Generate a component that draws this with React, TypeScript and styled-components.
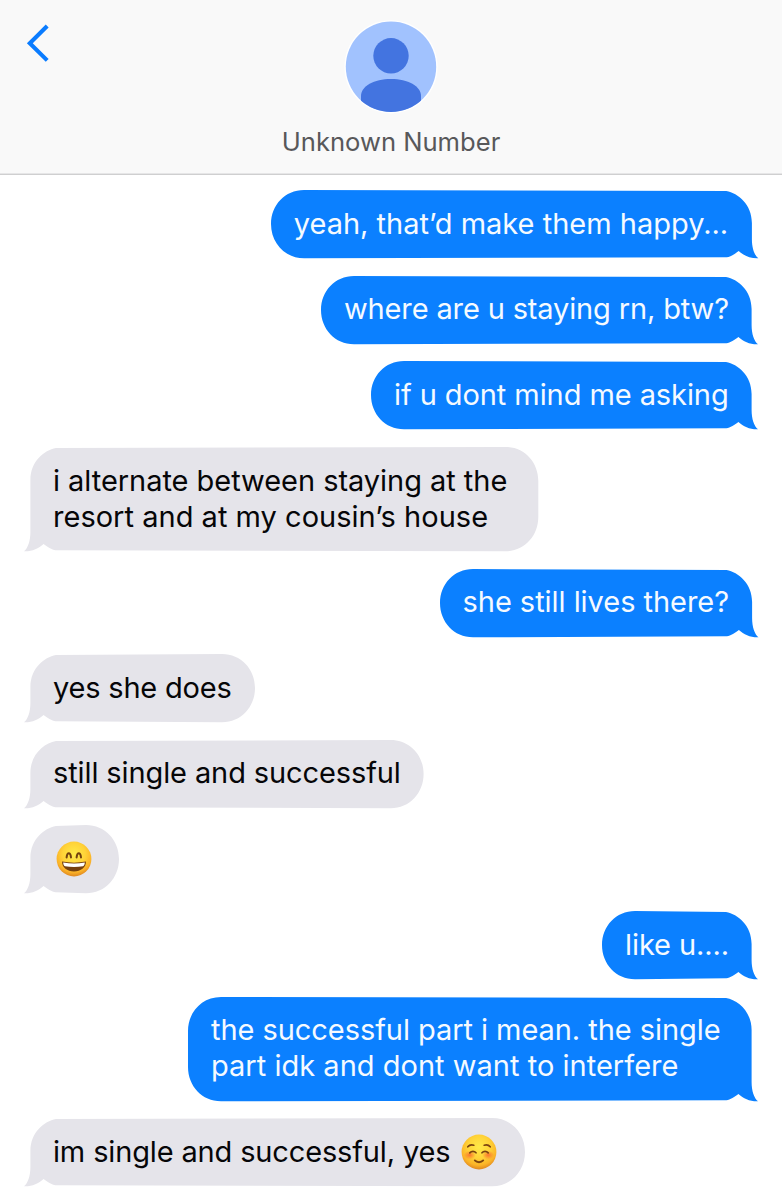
import React from 'react';
import styled, { createGlobalStyle } from 'styled-components';

const SENT = '#0b80ff';
const RECEIVED = '#e5e4ea';

const GlobalStyle = createGlobalStyle`
  * { box-sizing: border-box; }
  body { margin: 0; background: #fff; }
`;

const Screen = styled.div`
  width: 100%;
  height: 1200px;
  overflow: hidden;
  background: #fff;
  font-family: Inter, 'Liberation Sans', sans-serif;
`;

const Header = styled.header`
  display: grid;
  grid-template-columns: 60px 1fr 60px;
  height: 175px;
  background: #f9f9f9;
  border-bottom: 1px solid #cfcfd0;
  box-shadow: inset 0 -1px 0 #e6e6e7;
`;

const BackButton = styled.button`
  align-self: start;
  justify-self: end;
  width: 36px;
  height: 44px;
  margin-top: 21px;
  padding: 0;
  border: 0;
  background: none;
  cursor: pointer;
`;

const Contact = styled.div`
  display: flex;
  flex-direction: column;
  align-items: center;
  padding-top: 20px;
`;

const ContactName = styled.h1`
  margin: 12px 0 0;
  font-size: 25.6px;
  font-weight: 400;
  line-height: 32px;
  color: #58585a;
  white-space: nowrap;
`;

const Thread = styled.main`
  display: flex;
  flex-direction: column;
  gap: 17.62px;
  padding: 15.1px 24px 0;
`;

const Bubble = styled.div<{ $sent: boolean; $width: number; $lines: number }>`
  position: relative;
  flex: none;
  align-self: ${(p) => (p.$sent ? 'flex-end' : 'flex-start')};
  width: ${(p) => p.$width}px;
  height: ${(p) => 32 + p.$lines * 36}px;
  padding: 15.7px 0 0 ${(p) => (p.$sent ? 23 : 29)}px;
  color: ${(p) => (p.$sent ? '#f5faff' : '#060608')};
`;

const Outline = styled.svg<{ $sent: boolean }>`
  position: absolute;
  inset: 0;
  overflow: visible;
  fill: ${(p) => (p.$sent ? SENT : RECEIVED)};
  transform: ${(p) => (p.$sent ? 'none' : 'scaleX(-1)')};
`;

const Line = styled.div<{ $tracking: number }>`
  position: relative;
  display: flex;
  align-items: center;
  height: 36px;
  font-size: 29px;
  line-height: 36px;
  letter-spacing: ${(p) => p.$tracking}px;
  white-space: pre;
`;

const EmojiIcon = styled.svg<{ $gap: number }>`
  flex: none;
  width: 36px;
  height: 36px;
  margin-left: ${(p) => p.$gap}px;
`;

type EmojiKind = 'grin' | 'relaxed';

function Emoji({ kind, gap }: { kind: EmojiKind; gap: number }) {
  const face = `${kind}-face`;
  const blush = `${kind}-blush`;
  return (
    <EmojiIcon viewBox="0 0 36 36" $gap={gap} role="img" aria-label={kind}>
      <defs>
        <radialGradient id={face} cx="50%" cy="36%" r="65%">
          <stop offset="0" stopColor="#ffea48" />
          <stop offset="0.5" stopColor="#ffd338" />
          <stop offset="0.8" stopColor="#fbb328" />
          <stop offset="1" stopColor="#dd8420" />
        </radialGradient>
        <radialGradient id={blush}>
          <stop offset="0" stopColor="#f9642e" stopOpacity="0.85" />
          <stop offset="1" stopColor="#f9642e" stopOpacity="0" />
        </radialGradient>
      </defs>
      <circle cx="18" cy="18" r="17.4" fill={`url(#${face})`} />
      {kind === 'grin' ? (
        <>
          <g fill="none" stroke="#74420f" strokeWidth="2" strokeLinecap="round">
            <path d="M10.6 16.4C11.2 11 14.4 11 15 16.4" />
            <path d="M20.6 16.4C21.2 11 24.4 11 25 16.4" />
          </g>
          <path d="M6 20.6C14 22 22 22 30 20.6C30 26.8 24.8 30.4 18 30.4S6 26.8 6 20.6Z" fill="#75400f" />
          <path d="M7.2 21.4C14.5 22.8 21.5 22.8 28.8 21.4C28.7 23.4 28 24.8 27 25.2C21 26.2 15 26.2 9 25.2C7.8 24.6 7.3 23.4 7.2 21.4Z" fill="#fff" />
        </>
      ) : (
        <>
          <ellipse cx="8.8" cy="21" rx="6" ry="4.4" fill={`url(#${blush})`} />
          <ellipse cx="27.2" cy="21" rx="6" ry="4.4" fill={`url(#${blush})`} />
          <g fill="none" stroke="#7b4310" strokeWidth="1.7" strokeLinecap="round">
            <path d="M6.8 12.8C8.2 11 10.4 10.4 12.8 11.2" />
            <path d="M23.2 11.2C25.6 10.4 27.8 11 29.2 12.8" />
            <path d="M8.8 18.8C10.6 17 13.4 17 15 18.8" />
            <path d="M21 18.8C22.6 17 25.4 17 27.2 18.8" />
            <path d="M13.8 26.4C16 28.8 20 28.8 22.2 26.4" strokeWidth="1.9" />
          </g>
        </>
      )}
    </EmojiIcon>
  );
}

/* Rounded body with a slight taper toward the tail, which hangs from the lower right corner. */
function bubblePath(w: number, h: number) {
  const edge = w - 6.4;
  return [
    `M33 0L${w - 32} 1`,
    `C${w - 20} 3.2 ${edge} 14.5 ${edge} 33`,
    `V${h - 19}`,
    `C${edge} ${h - 10} ${w - 4} ${h - 3} ${w} ${h + 0.3}`,
    `C${w - 8} ${h + 0.6} ${w - 14.5} ${h - 2.4} ${w - 19.6} ${h - 7}`,
    `C${w - 23} ${h - 4.4} ${w - 28} ${h - 1} ${w - 31.5} ${h - 0.8}`,
    `L33 ${h + 0.3}`,
    `C14 ${h + 0.3} 0 ${h - 15} 0 ${h - 34}`,
    `V34C0 15 14 0 33 0Z`,
  ].join('');
}

interface TextLine {
  text?: string;
  tracking?: number;
  emoji?: EmojiKind;
  gap?: number;
}

interface Message {
  sent: boolean;
  width: number;
  lines: TextLine[];
}

const messages: Message[] = [
  { sent: true, width: 487.3, lines: [{ text: 'yeah, that’d make them happy...', tracking: 0 }] },
  { sent: true, width: 437, lines: [{ text: 'where are u staying rn, btw?', tracking: -0.14 }] },
  { sent: true, width: 387, lines: [{ text: 'if u dont mind me asking', tracking: -0.08 }] },
  {
    sent: false,
    width: 514.3,
    lines: [
      { text: 'i alternate between staying at the', tracking: -0.04 },
      { text: 'resort and at my cousin’s house', tracking: 0.02 },
    ],
  },
  { sent: true, width: 318.5, lines: [{ text: 'she still lives there?', tracking: -0.04 }] },
  { sent: false, width: 231, lines: [{ text: 'yes she does', tracking: -0.2 }] },
  { sent: false, width: 399.6, lines: [{ text: 'still single and successful', tracking: -0.11 }] },
  { sent: false, width: 95, lines: [{ emoji: 'grin', gap: 2.5 }] },
  { sent: true, width: 156, lines: [{ text: 'like u....', tracking: -0.08 }] },
  {
    sent: true,
    width: 570,
    lines: [
      { text: 'the successful part i mean. the single', tracking: -0.06 },
      { text: 'part idk and dont want to interfere', tracking: 0.02 },
    ],
  },
  { sent: false, width: 501, lines: [{ text: 'im single and successful, yes', tracking: -0.15, emoji: 'relaxed', gap: 11 }] },
];

function MessageBubble({ sent, width, lines }: Message) {
  const height = 32 + lines.length * 36;
  return (
    <Bubble $sent={sent} $width={width} $lines={lines.length}>
      <Outline $sent={sent} width={width} height={height} aria-hidden="true">
        <path d={bubblePath(width, height)} />
      </Outline>
      {lines.map((line, i) => (
        <Line key={i} $tracking={line.tracking ?? 0}>
          {line.text && <span>{line.text}</span>}
          {line.emoji && <Emoji kind={line.emoji} gap={line.gap ?? 0} />}
        </Line>
      ))}
    </Bubble>
  );
}

export default function App() {
  return (
    <Screen>
      <GlobalStyle />
      <Header>
        <BackButton aria-label="Back">
          <svg width="36" height="44" viewBox="24 21 36 44" fill="none" stroke="#0a7cff" strokeWidth="4.1">
            <path d="M47.2 26L29.8 43.2L47.2 60.4" />
          </svg>
        </BackButton>
        <Contact>
          <svg width="94" height="94" viewBox="0 0 94 94" aria-hidden="true">
            <clipPath id="avatar-clip">
              <circle cx="47" cy="46.8" r="45.2" />
            </clipPath>
            <circle cx="47" cy="46.8" r="46.6" fill="#fff" />
            <g clipPath="url(#avatar-clip)">
              <rect width="94" height="94" fill="#a1c2fe" />
              <circle cx="47" cy="35.8" r="17.7" fill="#4374e0" />
              <path d="M17 94V76C17 66 30 59 47 59S77 66 77 76V94Z" fill="#4374e0" />
            </g>
          </svg>
          <ContactName>Unknown Number</ContactName>
        </Contact>
      </Header>
      <Thread>
        {messages.map((message, i) => (
          <MessageBubble key={i} {...message} />
        ))}
      </Thread>
    </Screen>
  );
}
